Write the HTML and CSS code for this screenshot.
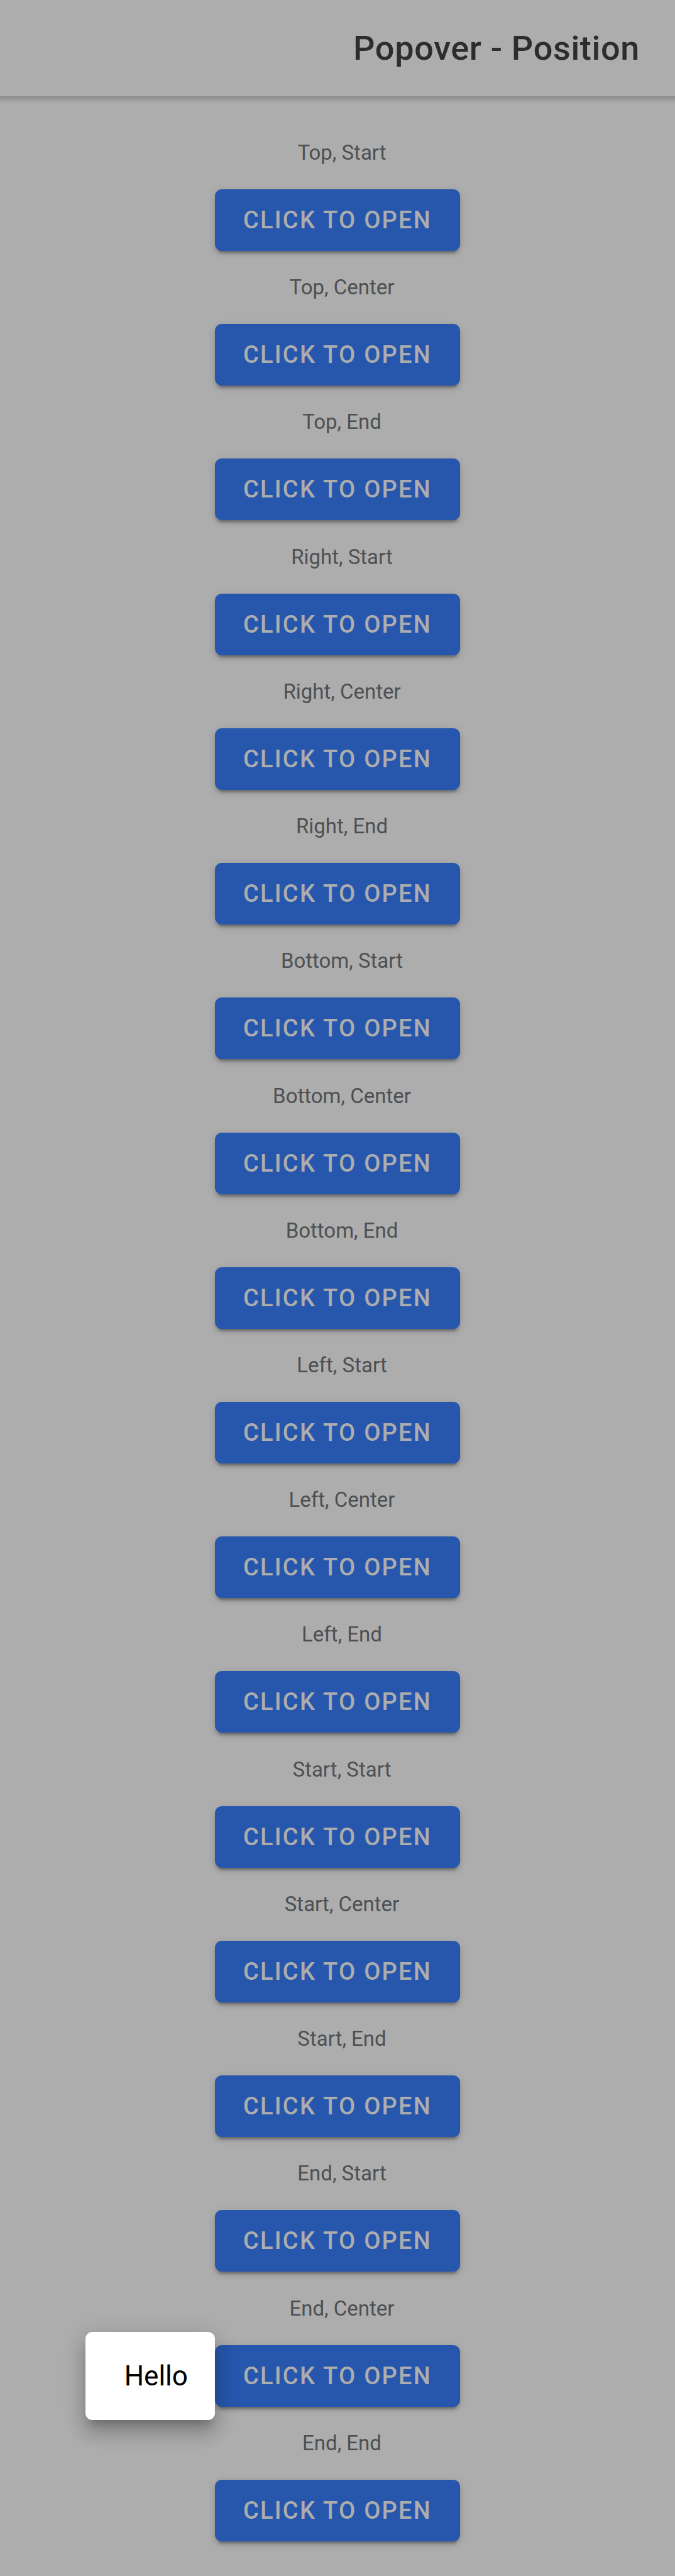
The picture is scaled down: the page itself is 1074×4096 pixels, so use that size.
FILE: index.html
```html
<!DOCTYPE html>
<html lang="en" dir="rtl">
<head>
<meta charset="UTF-8">
<meta name="viewport" content="width=device-width, initial-scale=1">
<title>Popover - Position</title>
<link rel="stylesheet" href="styles.css">
</head>
<body>
<header class="header"><h1 class="title">Popover - Position</h1></header>
<main class="list">
<section class="item"><h2 class="label" id="l1">Top, Start</h2><div class="anchor"><button class="button" type="button" aria-describedby="l1">Click to open</button></div></section>
<section class="item"><h2 class="label" id="l2">Top, Center</h2><div class="anchor"><button class="button" type="button" aria-describedby="l2">Click to open</button></div></section>
<section class="item"><h2 class="label" id="l3">Top, End</h2><div class="anchor"><button class="button" type="button" aria-describedby="l3">Click to open</button></div></section>
<section class="item"><h2 class="label" id="l4">Right, Start</h2><div class="anchor"><button class="button" type="button" aria-describedby="l4">Click to open</button></div></section>
<section class="item"><h2 class="label" id="l5">Right, Center</h2><div class="anchor"><button class="button" type="button" aria-describedby="l5">Click to open</button></div></section>
<section class="item"><h2 class="label" id="l6">Right, End</h2><div class="anchor"><button class="button" type="button" aria-describedby="l6">Click to open</button></div></section>
<section class="item"><h2 class="label" id="l7">Bottom, Start</h2><div class="anchor"><button class="button" type="button" aria-describedby="l7">Click to open</button></div></section>
<section class="item"><h2 class="label" id="l8">Bottom, Center</h2><div class="anchor"><button class="button" type="button" aria-describedby="l8">Click to open</button></div></section>
<section class="item"><h2 class="label" id="l9">Bottom, End</h2><div class="anchor"><button class="button" type="button" aria-describedby="l9">Click to open</button></div></section>
<section class="item"><h2 class="label" id="l10">Left, Start</h2><div class="anchor"><button class="button" type="button" aria-describedby="l10">Click to open</button></div></section>
<section class="item"><h2 class="label" id="l11">Left, Center</h2><div class="anchor"><button class="button" type="button" aria-describedby="l11">Click to open</button></div></section>
<section class="item"><h2 class="label" id="l12">Left, End</h2><div class="anchor"><button class="button" type="button" aria-describedby="l12">Click to open</button></div></section>
<section class="item"><h2 class="label" id="l13">Start, Start</h2><div class="anchor"><button class="button" type="button" aria-describedby="l13">Click to open</button></div></section>
<section class="item"><h2 class="label" id="l14">Start, Center</h2><div class="anchor"><button class="button" type="button" aria-describedby="l14">Click to open</button></div></section>
<section class="item"><h2 class="label" id="l15">Start, End</h2><div class="anchor"><button class="button" type="button" aria-describedby="l15">Click to open</button></div></section>
<section class="item"><h2 class="label" id="l16">End, Start</h2><div class="anchor"><button class="button" type="button" aria-describedby="l16">Click to open</button></div></section>
<section class="item"><h2 class="label" id="l17">End, Center</h2><div class="anchor"><button class="button" type="button" aria-describedby="l17" aria-expanded="true">Click to open</button><div class="popover" role="dialog" aria-label="Hello">Hello</div></div></section>
<section class="item"><h2 class="label" id="l18">End, End</h2><div class="anchor"><button class="button" type="button" aria-describedby="l18">Click to open</button></div></section>
</main>
</body>
</html>
```
FILE: styles.css
```css
* {
  box-sizing: border-box;
}

body {
  margin: 0;
  min-height: 100vh;
  display: flex;
  flex-direction: column;
  background: #adadad;
  font-family: Roboto, "Liberation Sans", sans-serif;
}

.header {
  position: relative;
  display: flex;
  align-items: center;
  height: 153px;
  padding: 0 56px;
}

.header::after {
  content: "";
  position: absolute;
  top: 100%;
  left: 0;
  right: 0;
  height: 14px;
  background: linear-gradient(rgba(0, 0, 0, 0.19), rgba(0, 0, 0, 0.13) 30%, rgba(0, 0, 0, 0.03) 70%, transparent);
}

.title {
  margin: 0;
  color: #2d2d2d;
  font-size: 54px;
  font-weight: 500;
  letter-spacing: 0.0125em;
}

.list {
  flex: 1;
  display: grid;
  grid-auto-rows: 1fr;
  padding: 71px 0 16px;
}

.item {
  display: flex;
  flex-direction: column;
  align-items: center;
  gap: 39px;
}

.label {
  margin: 0;
  padding-left: 14px;
  color: #4d5052;
  font-size: 33px;
  font-weight: 400;
  line-height: 38px;
}

.anchor {
  position: relative;
}

.button {
  display: block;
  height: 98px;
  padding: 0 45px;
  border: 0;
  border-radius: 11px;
  background: #2657ad;
  box-shadow: 0 8px 3px -5px rgba(0, 0, 0, 0.2), 0 5px 5px rgba(0, 0, 0, 0.14), 0 3px 14px rgba(0, 0, 0, 0.12);
  color: #adadad;
  font-family: inherit;
  font-size: 38px;
  font-weight: 500;
  letter-spacing: 0.06em;
  text-transform: uppercase;
  white-space: nowrap;
}

.popover {
  position: absolute;
  top: -21px;
  right: 100%;
  width: 206px;
  padding: 44px 43px;
  border-radius: 11px;
  background: #fff;
  box-shadow: 0 14px 14px -8px rgba(0, 0, 0, 0.2), 0 22px 27px 3px rgba(0, 0, 0, 0.14), 0 8px 38px 5px rgba(0, 0, 0, 0.12);
  color: #000;
  font-size: 44px;
  line-height: 52px;
}
```
